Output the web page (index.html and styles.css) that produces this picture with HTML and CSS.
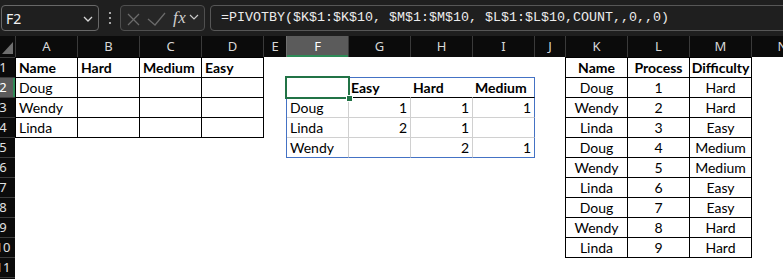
FILE: index.html
```html
<!DOCTYPE html>
<html>
<head>
<meta charset="utf-8">
<link rel="stylesheet" href="styles.css">
</head>
<body>
<div class="app">
  <div class="topbar">
    <div class="namebox">
      <span class="ref">F2</span>
      <svg class="chev" width="10" height="6" viewBox="0 0 10 6"><polyline points="1,1 5,5 9,1" fill="none" stroke="#d6d6d6" stroke-width="1.3"/></svg>
    </div>
    <div class="sep">
      <svg width="4" height="14" viewBox="0 0 4 14"><circle cx="2" cy="2" r="1.1" fill="#c8c8c8"/><circle cx="2" cy="7" r="1.1" fill="#c8c8c8"/><circle cx="2" cy="12" r="1.1" fill="#c8c8c8"/></svg>
    </div>
    <div class="fxbox">
      <svg class="icons" width="50" height="24" viewBox="0 0 50 24">
        <line x1="7" y1="8" x2="18" y2="19" stroke="#6a6a6a" stroke-width="1.3"/>
        <line x1="18" y1="8" x2="7" y2="19" stroke="#6a6a6a" stroke-width="1.3"/>
        <polyline points="27,13 34,19 44,7" fill="none" stroke="#6a6a6a" stroke-width="1.3"/>
      </svg>
      <span class="fx">fx</span>
      <svg class="chev2" width="10" height="6" viewBox="0 0 10 6"><polyline points="1,1 5,5 9,1" fill="none" stroke="#c8c8c8" stroke-width="1.2"/></svg>
    </div>
    <div class="formula">=PIVOTBY($K$1:$K$10, $M$1:$M$10, $L$1:$L$10,COUNT,,0,,0)</div>
  </div>

  <div class="sheet">
    <div class="corner">
      <svg width="15" height="21" viewBox="0 0 15 21"><polygon points="2,18 13,6 13,18" fill="#6f6f6f"/></svg>
    </div>
    <div class="colh">A</div>
    <div class="colh">B</div>
    <div class="colh">C</div>
    <div class="colh">D</div>
    <div class="colh">E</div>
    <div class="colh sel">F</div>
    <div class="colh">G</div>
    <div class="colh">H</div>
    <div class="colh">I</div>
    <div class="colh">J</div>
    <div class="colh">K</div>
    <div class="colh">L</div>
    <div class="colh">M</div>
    <div class="colh">N</div>

    <div class="rowheads">
      <div class="rowh"><span>1</span></div>
      <div class="rowh sel"><span>2</span></div>
      <div class="rowh"><span>3</span></div>
      <div class="rowh"><span>4</span></div>
      <div class="rowh"><span>5</span></div>
      <div class="rowh"><span>6</span></div>
      <div class="rowh"><span>7</span></div>
      <div class="rowh"><span>8</span></div>
      <div class="rowh"><span>9</span></div>
      <div class="rowh"><span>10</span></div>
      <div class="rowh"><span>11</span></div>
      <div class="rowh"><span>12</span></div>
    </div>

    <div class="tbl t-left">
      <div class="c b">Name</div><div class="c b">Hard</div><div class="c b">Medium</div><div class="c b">Easy</div>
      <div class="c">Doug</div><div class="c"></div><div class="c"></div><div class="c"></div>
      <div class="c">Wendy</div><div class="c"></div><div class="c"></div><div class="c"></div>
      <div class="c">Linda</div><div class="c"></div><div class="c"></div><div class="c"></div>
    </div>

    <div class="pivot t-pivot">
      <div class="p ph"></div><div class="p ph phc">Easy</div><div class="p ph phc">Hard</div><div class="p ph phc last">Medium</div>
      <div class="p">Doug</div><div class="p n">1</div><div class="p n">1</div><div class="p n last">1</div>
      <div class="p">Linda</div><div class="p n">2</div><div class="p n">1</div><div class="p n last"></div>
      <div class="p bot">Wendy</div><div class="p n bot"></div><div class="p n bot">2</div><div class="p n bot last">1</div>
      <div class="selbox"><div class="handle"></div></div>
    </div>

    <div class="tbl t-right">
      <div class="c b m">Name</div><div class="c b m">Process</div><div class="c b m">Difficulty</div>
      <div class="c m">Doug</div><div class="c m">1</div><div class="c m">Hard</div>
      <div class="c m">Wendy</div><div class="c m">2</div><div class="c m">Hard</div>
      <div class="c m">Linda</div><div class="c m">3</div><div class="c m">Easy</div>
      <div class="c m">Doug</div><div class="c m">4</div><div class="c m">Medium</div>
      <div class="c m">Wendy</div><div class="c m">5</div><div class="c m">Medium</div>
      <div class="c m">Linda</div><div class="c m">6</div><div class="c m">Easy</div>
      <div class="c m">Doug</div><div class="c m">7</div><div class="c m">Easy</div>
      <div class="c m">Wendy</div><div class="c m">8</div><div class="c m">Hard</div>
      <div class="c m">Linda</div><div class="c m">9</div><div class="c m">Hard</div>
    </div>
  </div>
</div>
</body>
</html>
```

FILE: styles.css
```css
html, body {
  margin: 0;
  padding: 0;
  background: #ffffff;
  overflow: hidden;
}

.app {
  width: 783px;
  height: 279px;
  overflow: hidden;
}

/* ---------- formula bar ---------- */
.topbar {
  height: 36px;
  background: #1f1f1f;
  display: flex;
  align-items: flex-start;
  padding: 5px 0 0 1px;
  box-sizing: border-box;
}

.namebox {
  width: 98px;
  height: 26px;
  box-sizing: border-box;
  border: 1px solid #686868;
  border-radius: 4px;
  display: flex;
  align-items: center;
  justify-content: space-between;
  padding: 0 5px 0 4px;
  color: #f2f2f2;
  font: 14px "Noto Sans", sans-serif;
}

.namebox .chev { margin-top: 1px; }

.sep {
  width: 21px;
  height: 26px;
  display: flex;
  align-items: center;
  justify-content: center;
}

.fxbox {
  width: 85px;
  height: 26px;
  box-sizing: border-box;
  border: 1px solid #4f4f4f;
  border-radius: 4px;
  background: #262626;
  display: flex;
  align-items: center;
}

.fxbox .icons { display: block; }

.fx {
  margin-left: 2px;
  font: italic 17px "Liberation Serif", serif;
  color: #cfcfcf;
  letter-spacing: 0.5px;
  line-height: 20px;
}

.chev2 { margin-left: 3px; margin-top: -3px; }

.formula {
  flex: 1;
  margin-left: 5px;
  margin-right: -30px;
  height: 26px;
  box-sizing: border-box;
  border: 1px solid #575757;
  border-radius: 4px;
  background: #1f1f1f;
  padding-left: 10px;
  font: 13.33px "Liberation Mono", monospace;
  line-height: 24px;
  color: #ececec;
  white-space: nowrap;
  overflow: hidden;
}

/* ---------- sheet ---------- */
.sheet {
  display: grid;
  grid-template-columns: 15px 62px 62px 62px 62px 23px 62px 62px 62px 62px 31px 62px 62px 62px 62px;
  grid-template-rows: 21px repeat(11, 20px) 20px;
  background: #ffffff;
}

.corner {
  background: #0b0b0b;
  grid-column: 1;
  grid-row: 1;
}
.corner svg { display: block; }

.colh {
  grid-row: 1;
  background: #0b0b0b;
  border-left: 1px solid #3a3a3a;
  color: #d8d8d8;
  font: 13px "Noto Sans", sans-serif;
  line-height: 21px;
  text-align: center;
}

.colh.sel {
  background: #5b5b5b;
  color: #ffffff;
  box-shadow: inset 0 -2px 0 #2e8b57;
  border-left-color: #707070;
}

.rowheads {
  grid-column: 1;
  grid-row: 2 / -1;
  background: #0b0b0b;
  display: flex;
  flex-direction: column;
}

.rowh {
  height: 20px;
  flex: none;
  box-sizing: border-box;
  border-top: 1px solid #3c3c3c;
  display: flex;
  justify-content: center;
  padding-right: 9px;
  overflow: hidden;
  color: #e0e0e0;
  font: 13px "Noto Sans", sans-serif;
  line-height: 19px;
}

.rowh span { flex: none; }

.rowh.sel {
  background: #5b5b5b;
  color: #ffffff;
  box-shadow: inset -2px 0 0 #2e8b57;
}

/* ---------- bordered tables ---------- */
.tbl {
  display: grid;
  grid-auto-rows: 20px;
  border-left: 1px solid #000;
  border-top: 1px solid #000;
  align-self: start;
  justify-self: start;
  font: 14px "Lato", sans-serif;
  color: #000;
}

.t-left {
  grid-column: 2 / 6;
  grid-row: 2 / 6;
  grid-template-columns: repeat(4, 62px);
}

.t-right {
  grid-column: 12 / 15;
  grid-row: 2 / 12;
  grid-template-columns: repeat(3, 62px);
}

.c {
  box-sizing: border-box;
  border-right: 1px solid #000;
  border-bottom: 1px solid #000;
  padding: 0 3px;
  line-height: 19px;
  white-space: nowrap;
  overflow: hidden;
}

.c.b { font-weight: 700; }
.c.m { text-align: center; padding: 0 1px; }

/* ---------- pivot ---------- */
.pivot {
  grid-column: 7 / 11;
  grid-row: 3 / 7;
  display: grid;
  grid-template-columns: repeat(4, 62px);
  grid-auto-rows: 20px;
  border-left: 1px solid #4472c4;
  border-top: 1px solid #4472c4;
  align-self: start;
  justify-self: start;
  position: relative;
  font: 14px "Lato", sans-serif;
  color: #000;
}

.p {
  box-sizing: border-box;
  border-right: 1px solid #d0d0d0;
  border-bottom: 1px solid #d0d0d0;
  padding: 0 3px;
  line-height: 19px;
  white-space: nowrap;
  overflow: hidden;
}

.p.ph { border-right-color: #ffffff; }
.p.phc { font-weight: 700; border-bottom-color: #000; padding-left: 2px; }
.p.n { text-align: right; }
.p.last { border-right: 1px solid #4472c4; }
.p.bot { border-bottom: 1px solid #4472c4; }

.selbox {
  position: absolute;
  left: -2px;
  top: -2px;
  width: 65px;
  height: 23px;
  box-sizing: border-box;
  border: 2px solid #217346;
}

.handle {
  position: absolute;
  right: -5px;
  bottom: -5px;
  width: 5px;
  height: 5px;
  background: #217346;
  border: 1px solid #ffffff;
}
```
